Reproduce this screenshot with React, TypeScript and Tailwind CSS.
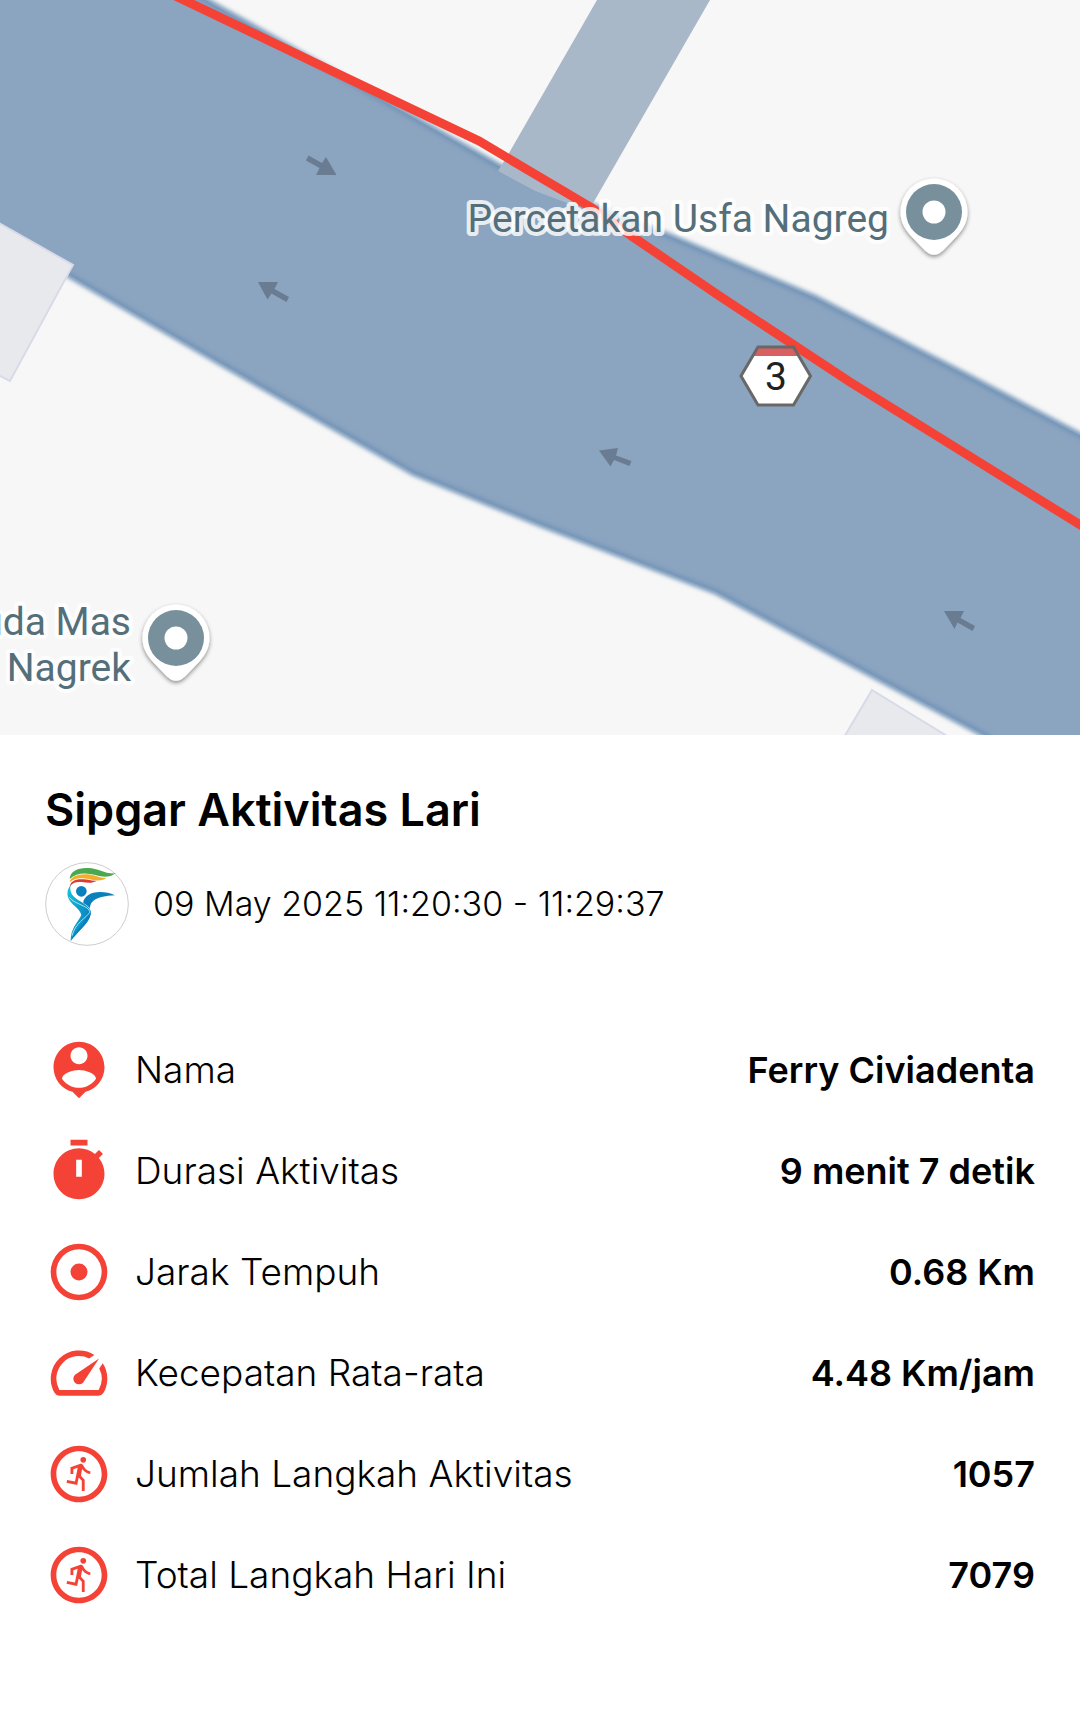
import type { ReactNode } from "react";
import { MdOutlineRunCircle } from "react-icons/md";

const ROAD =
  "-20,-20 172,-20 212,4 310,59 502,168 592,206 664,234 815,298 967,376 1100,446 1100,760 1010,760 985,735 717,592 540,524 414,473 226,366 69,275 -20,223";

function Pin({ x, y }: { x: number; y: number }) {
  return (
    <g transform={`translate(${x} ${y})`}>
      <path
        d="M0-33.5A33.5 33.5 0 0 0-33.5 0C-33.5 10-29 17-23 24L-9 38.500Q0 47 9 38.500L23 24C29 17 33.500 10 33.500 0A33.500 33.500 0 0 0 0-33.500Z"
        fill="#fff"
        filter="url(#pinShadow)"
      />
      <circle r="28" fill="#78909c" />
      <circle r="11.5" fill="#fff" />
    </g>
  );
}

function Label({ x, y, children }: { x: number; y: number; children: string }) {
  return (
    <text
      x={x}
      y={y}
      textAnchor="end"
      className="fill-[#546e7a] stroke-white/80 font-['Roboto',sans-serif] text-[39px] [paint-order:stroke] [stroke-linejoin:round] [stroke-width:8px]"
    >
      {children}
    </text>
  );
}

function RouteMap() {
  return (
    <svg viewBox="0 0 1080 735" className="block h-auto w-full bg-[#f7f7f7]" role="img" aria-label="Peta rute lari">
      <defs>
        <filter id="soften" x="-5%" y="-5%" width="110%" height="110%">
          <feGaussianBlur stdDeviation="2" />
        </filter>
        <filter id="pinShadow" x="-30%" y="-30%" width="160%" height="160%">
          <feDropShadow dx="0" dy="2" stdDeviation="2" floodColor="#000" floodOpacity="0.45" />
        </filter>
      </defs>

      <polygon points={ROAD} fill="#8ba4c0" />
      <polygon points={ROAD} fill="none" stroke="#7495b8" strokeWidth="6" filter="url(#soften)" />
      <polygon points="597,0 710,0 592,205 570,205 535,191 498,171 509,153" fill="#a9b8c9" />
      <polygon points="500,173 535,191 570,204 592,205 650,232 630,260 500,190" fill="#8ba4c0" />

      <g fill="#e8e9ed" stroke="#d8dae8" strokeWidth="2">
        <polygon points="-10,218 73,265 10,381 -10,371" />
        <polygon points="872,690 960,744 840,744" />
      </g>

      <g fill="#697c92">
        <path d="M308.500 155.500 322 163 326 157 336.500 175 316 175 319.500 168 306 160.500Z" />
        <path d="M258 282 278 282 274.500 289 289 297 286.500 302 271.500 293.500 267.500 299.500Z" />
        <path d="M599 450.500 618 448 616 455.500 631.500 461 629.500 466 614 460 610.500 466.500Z" />
        <path d="M944 611 964 611 960.500 618 975 626 972.500 631 957.500 622.500 954.500 629Z" />
      </g>

      <polyline
        points="163,-10 330,70 479,141 592,208 633,237 718,295 850,382 1090,531"
        fill="none"
        stroke="#f44336"
        strokeWidth="9"
      />

      <path d="M758 347H793.500L810 376 793.500 405H758L741 376Z" fill="#fff" />
      <path d="M758 347H793.500L798.500 356H753Z" fill="#d95f61" />
      <path d="M758 347H793.500L810.500 376 793.500 405H758L741 376Z" fill="none" stroke="#696866" strokeWidth="3" />
      <text x="776" y="390" textAnchor="middle" className="fill-[#212121] font-['Roboto',sans-serif] text-[39px]">
        3
      </text>

      <Label x={889} y={232}>Percetakan Usfa Nagreg</Label>
      <Pin x={934} y={212} />
      <Label x={131} y={635}>uda Mas</Label>
      <Label x={131} y={681}>Nagrek</Label>
      <Pin x={176} y={638} />
    </svg>
  );
}

function Logo() {
  return (
    <svg viewBox="15 21 252 252" className="size-[84px] shrink-0" role="img" aria-label="Sipgar">
      <defs>
        <linearGradient id="body" x1="0" y1="0" x2="1" y2="0.6">
          <stop offset="0" stopColor="#12c3dc" />
          <stop offset="1" stopColor="#0a80bd" />
        </linearGradient>
      </defs>
      <circle cx="141" cy="147" r="124" fill="#fff" stroke="#b4b4b4" strokeWidth="2" />
      <path d="M89 72C90 48 116 37 145 39C175 40 196 58 227 55C210 68 188 67 168 61C140 52 110 52 89 72Z" fill="#4aa94c" />
      <path d="M89 82C91 64 116 56 143 58C163 59 178 70 199 69C184 79 165 77 150 73C124 67 103 68 89 82Z" fill="#f3ae2c" />
      <path d="M90 95C89 79 108 71 130 73C147 73 155 79 170 77C155 87 140 82 125 81C108 80 97 83 90 95Z" fill="#dc3a33" />
      <circle cx="124" cy="109" r="16" fill="#0a80bd" />
      <path d="M92 90C84 100 80 112 84 127C92 151 119 158 124 180C116 200 91 218 92 258C116 224 149 205 152 176C153 158 136 148 118 137C98 125 87 113 92 90Z" fill="url(#body)" />
      <path d="M225 121C196 107 160 109 144 121C132 130 130 138 130 144C140 150 147 156 150 161C150 139 166 124 225 121Z" fill="#0a80bd" />
      <path d="M152 166C157 194 125 218 92 258C100 229 143 202 145 170Z" fill="#0a80bd" />
      <path d="M88 127C103 148 145 151 150 171C138 190 105 204 96 242" fill="none" stroke="#fff" strokeWidth="2" />
    </svg>
  );
}

function Icon({ d }: { d: string }) {
  return (
    <svg viewBox="0 0 24 24" fill="currentColor" fillRule="evenodd" className="size-[68px]" aria-hidden="true">
      <path d={d} />
    </svg>
  );
}

const PERSON =
  "M12 2c-4.970 0-9 4.030-9 9 0 4.170 2.840 7.670 6.690 8.690L12 22l2.310-2.310C18.160 18.670 21 15.170 21 11c0-4.970-4.030-9-9-9zm0 2c1.660 0 3 1.340 3 3s-1.340 3-3 3-3-1.340-3-3 1.340-3 3-3zm0 14.300c-2.500 0-4.710-1.280-6-3.220.030-1.990 4-3.080 6-3.080 1.990 0 5.970 1.090 6 3.080-1.290 1.940-3.500 3.220-6 3.220z";
const TIMER =
  "M15 1H9v2h6V1zm4.030 6.390l1.420-1.420c-.430-.510-.900-.990-1.410-1.410l-1.420 1.420C16.070 4.740 14.120 4 12 4c-4.970 0-9 4.030-9 9s4.020 9 9 9 9-4.030 9-9c0-2.120-.740-4.070-1.970-5.610zM13 14h-2V8h2v6z";
const TARGET =
  "M12 2a10 10 0 1 0 0 20a10 10 0 0 0 0-20zm0 18a8 8 0 1 1 0-16a8 8 0 0 1 0 16zM12 9a3 3 0 1 0 0 6a3 3 0 0 0 0-6z";
const SPEED =
  "M20.380 8.570l-1.230 1.850a8 8 0 0 1-.220 7.580H5.070A8 8 0 0 1 15.580 6.850l1.850-1.230A10 10 0 0 0 3.350 19a2 2 0 0 0 1.720 1h13.850a2 2 0 0 0 1.740-1 10 10 0 0 0-.270-10.440zm-9.790 6.840a2 2 0 0 0 2.830 0l5.660-8.490-8.490 5.660a2 2 0 0 0 0 2.830z";

const stats: { icon: ReactNode; label: string; value: string }[] = [
  { icon: <Icon d={PERSON} />, label: "Nama", value: "Ferry Civiadenta" },
  { icon: <Icon d={TIMER} />, label: "Durasi Aktivitas", value: "9 menit 7 detik" },
  { icon: <Icon d={TARGET} />, label: "Jarak Tempuh", value: "0.68 Km" },
  { icon: <Icon d={SPEED} />, label: "Kecepatan Rata-rata", value: "4.48 Km/jam" },
  { icon: <MdOutlineRunCircle size={68} />, label: "Jumlah Langkah Aktivitas", value: "1057" },
  { icon: <MdOutlineRunCircle size={68} />, label: "Total Langkah Hari Ini", value: "7079" },
];

export default function App() {
  return (
    <main className="min-h-screen bg-white font-['Inter',sans-serif] text-black">
      <RouteMap />
      <section className="px-[45px] pt-12">
        <h1 className="text-[45px] leading-[54px] font-semibold">Sipgar Aktivitas Lari</h1>
        <div className="mt-[25px] flex items-center gap-6">
          <Logo />
          <p className="text-[34px] leading-10 font-light">09 May 2025 11:20:30 - 11:29:37</p>
        </div>
        <dl className="mt-[73px]">
          {stats.map((s) => (
            <div key={s.label} className="flex min-h-[101px] items-center">
              <dt className="flex items-center gap-[22px] text-[37px] leading-10 font-light">
                <span className="shrink-0 text-[#f44336]">{s.icon}</span>
                {s.label}
              </dt>
              <dd className="ml-auto text-right text-[36px] leading-10 font-semibold">{s.value}</dd>
            </div>
          ))}
        </dl>
      </section>
    </main>
  );
}
